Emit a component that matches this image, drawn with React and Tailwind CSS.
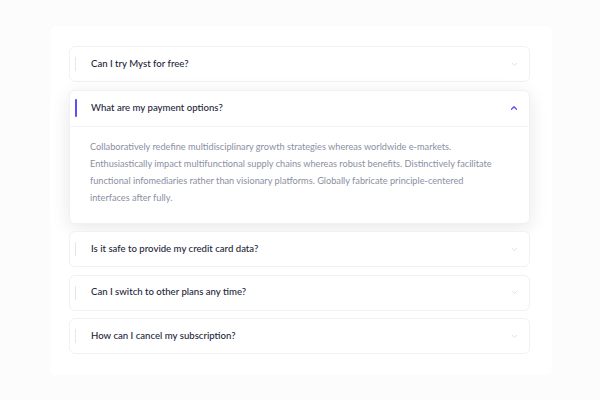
import { ChevronDown, ChevronUp } from 'lucide-react';

const FAQS = [
  { q: 'Can I try Myst for free?' },
  {
    q: 'What are my payment options?',
    a: 'Collaboratively redefine multidisciplinary growth strategies whereas worldwide e-markets. Enthusiastically impact multifunctional supply chains whereas robust benefits. Distinctively facilitate functional infomediaries rather than visionary platforms. Globally fabricate principle-centered interfaces after fully.',
    open: true,
  },
  { q: 'Is it safe to provide my credit card data?' },
  { q: 'Can I switch to other plans any time?' },
  { q: 'How can I cancel my subscription?' },
];

export default function App() {
  return (
    <div className="w-[600px] h-[400px] bg-[#fcfcfd] pt-[26px] pl-[50px] font-['Lato',sans-serif]">
      <div className="w-[502px] bg-white rounded-md pt-[20px] pb-[21px] pl-[19px] pr-[22px] flex flex-col gap-[7.5px]">
        {FAQS.map(f => (
          <div key={f.q}
            className={f.open
              ? 'rounded-md bg-white border border-[#f1f1f4] shadow-[0_4px_18px_rgba(30,30,60,0.10)]'
              : 'rounded-md bg-white border border-[#f1f1f4]'}>
            <div className={f.open ? 'h-[36px] flex items-center pl-[5px] pr-[10px] border-b border-[#f3f3f6]' : 'h-[34px] flex items-center pl-[5px] pr-[10px]'}>
              <div className={f.open ? 'w-[2px] h-[18px] bg-[#5a4ff0] rounded-full' : 'w-[1px] h-[14px] bg-[#e6e6ea]'} />
              <div className={f.open ? 'ml-[14px] text-[9.6px] font-medium text-[#23263a]' : 'ml-[15px] text-[9.6px] font-medium text-[#23263a]'}>{f.q}</div>
              <div className="ml-auto">
                {f.open
                  ? <ChevronUp size={10} strokeWidth={3} className="text-[#5a4ff0]" />
                  : <ChevronDown size={9} strokeWidth={2} className="text-[#d6d6dc]" />}
              </div>
            </div>
            {f.open && (
              <p className="pl-[20px] pr-[36px] pt-[11px] pb-[17px] text-[9.2px] leading-[17px] text-[#8b8fa3]">{f.a}</p>
            )}
          </div>
        ))}
      </div>
    </div>
  );
}
